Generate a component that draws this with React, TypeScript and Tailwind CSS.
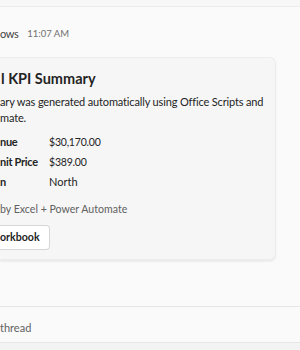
import React from "react";

export default function App() {
  return (
    <div className="w-[300px] h-[350px] overflow-hidden bg-[#fafafa] text-[#242424] font-['Lato','Noto_Sans',sans-serif]">
      <div className="h-[7px] border-b border-[#ececec] bg-[#f7f7f7]" />
      <div className="h-[50px] flex items-center gap-[9px] pt-[5px]">
        <span className="text-[11px] text-[#424242] tracking-[-0.4px]">ows</span>
        <span className="text-[9.5px] text-[#707070]">11:07 AM</span>
      </div>
      <div className="mr-[24px] h-[203px] rounded-r-[6px] bg-[#f6f6f6] border border-l-0 border-[#ececec] shadow-[0_2px_2px_rgba(0,0,0,0.06)] pt-[11px]">
        <div className="text-[14.5px] font-bold leading-[20px] text-[#242424] pl-[1px]">l KPI Summary</div>
        <div className="mt-[5px] text-[11px] leading-[16px] text-[#242424] tracking-[-0.15px]">
          <div className="whitespace-nowrap">ary was generated automatically using Office Scripts and</div>
          <div>mate.</div>
        </div>
        <div className="mt-[6px] grid grid-cols-[49px_1fr] text-[11px] leading-[20px]">
          <span className="font-bold whitespace-nowrap tracking-[-0.3px]">nue</span>
          <span className="text-[10.5px] tracking-[-0.2px]">$30,170.00</span>
          <span className="font-bold whitespace-nowrap tracking-[-0.3px]">nit Price</span>
          <span className="text-[10.5px] tracking-[-0.2px]">$389.00</span>
          <span className="font-bold">n</span>
          <span>North</span>
        </div>
        <div className="mt-[9px] text-[10.6px] leading-[16px] text-[#616161]">by Excel + Power Automate</div>
        <div className="mt-[6px]">
          <div className="inline-flex h-[25px] items-center rounded-r-[4px] border border-l-0 border-[#d6d6d6] bg-white pr-[9px] text-[10.6px] font-bold">
            orkbook
          </div>
        </div>
      </div>
      <div className="h-[46px]" />
      <div className="h-[37px] border-t border-b border-[#e6e6e6] flex items-center text-[11px] text-[#616161] pt-[8px]">
        thread
      </div>
      <div className="h-[10px] bg-[#f3f3f3]" />
    </div>
  );
}
